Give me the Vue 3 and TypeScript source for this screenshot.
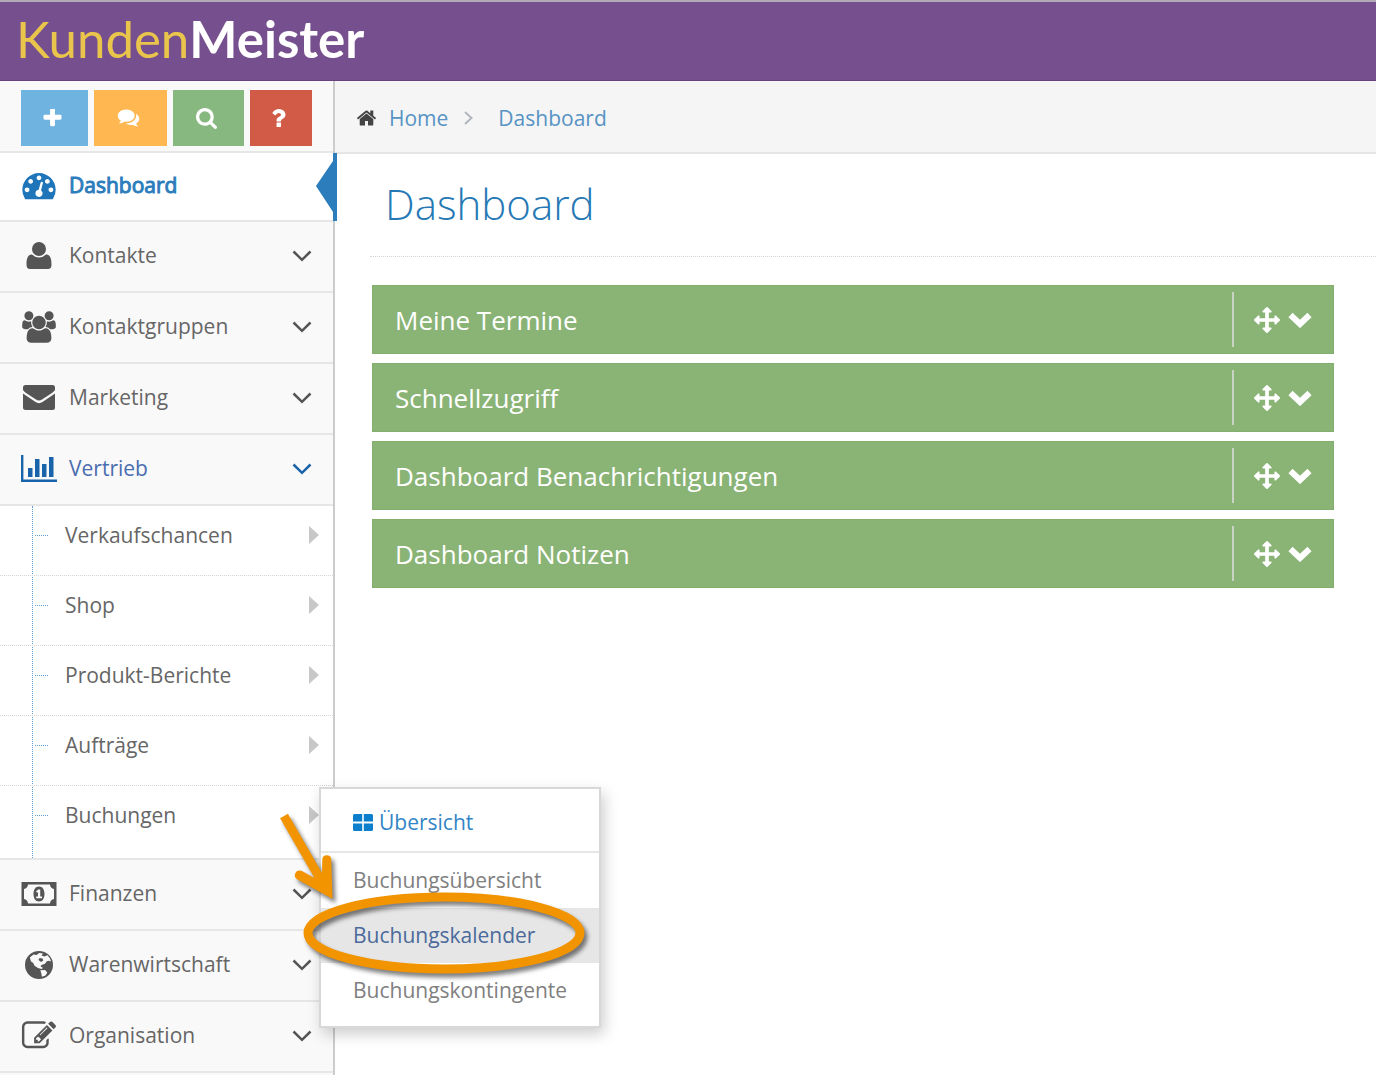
<script setup lang="ts">
interface Icon {
  box: string
  d: string
}

interface NavItem {
  label: string
  icon: string
  active?: boolean
  open?: boolean
  children?: string[]
}

const icons: Record<string, Icon> = {
  plus: {
    box: '192 192 1408 1408',
    d: 'M1600 736v192q0 40-28 68t-68 28h-416v416q0 40-28 68t-68 28h-192q-40 0-68-28t-28-68v-416h-416q-40 0-68-28t-28-68v-192q0-40 28-68t68-28h416v-416q0-40 28-68t68-28h192q40 0 68 28t28 68v416h416q40 0 68 28t28 68z',
  },
  comments: {
    box: '0 128 1792 1664',
    d: 'M1408 768q0 139-94 257t-256.5 186.5-353.5 68.5q-86 0-176-16-124 88-278 128-36 9-86 16h-3q-11 0-20.5-8t-11.5-21q-1-3-1-6.5t.5-6.5 2-6l2.5-5 3.5-5.5 4-5 4.5-5 4-4.5q5-6 23-25t26-29.5 22.5-29 25-38.5 20.5-44q-124-72-195-177t-71-224q0-139 94-257t256.5-186.5 353.5-68.5 353.5 68.5 256.5 186.5 94 257zm384 256q0 120-71 224.5t-195 176.5q10 24 20.5 44t25 38.5 22.5 29 26 29.5 23 25q1 1 4 4.5t4.5 5 4 5 3.5 5.5l2.5 5 2 6 .5 6.5-1 6.5q-3 14-13 22t-22 7q-50-7-86-16-154-40-278-128-90 16-176 16-271 0-472-132 58 4 88 4 161 0 309-45t264-129q125-92 192-212t67-254q0-77-23-152 129 71 204 178t75 230z',
  },
  search: {
    box: '64 128 1664 1664',
    d: 'M1216 832q0-185-131.5-316.5t-316.5-131.5-316.5 131.5-131.5 316.5 131.5 316.5 316.5 131.5 316.5-131.5 131.5-316.5zm512 832q0 52-38 90t-90 38q-54 0-90-38l-343-342q-179 124-399 124-143 0-273.5-55.5t-225-150-150-225-55.5-273.5 55.5-273.5 150-225 225-150 273.5-55.5 273.5 55.5 225 150 150 225 55.5 273.5q0 220-124 399l343 343q37 37 37 90z',
  },
  question: {
    box: '484 256 920 1280',
    d: 'M1088 1256v240q0 16-12 28t-28 12h-240q-16 0-28-12t-12-28v-240q0-16 12-28t28-12h240q16 0 28 12t12 28zm316-600q0 54-15.5 101t-35 76.5-55 59.5-57.5 43.5-61 35.5q-41 23-68.5 65t-27.5 67q0 17-12 32.5t-28 15.5h-240q-15 0-25.5-18.5t-10.5-37.5v-45q0-83 65-156.5t143-108.5q59-27 84-56t25-76q0-42-46.5-74t-107.5-32q-65 0-108 29-35 25-107 115-13 16-31 16-12 0-25-8l-164-125q-13-10-15.5-25t5.5-28q160-266 464-266 80 0 161 31t146 83 106 127.5 41 158.5z',
  },
  home: {
    box: '90 248 1612 1288',
    d: 'M1472 992v480q0 26-19 45t-45 19h-384v-384h-256v384h-384q-26 0-45-19t-19-45v-480q0-1 .5-3t.5-3l575-474 575 474q1 2 1 6zm223-69l-62 74q-8 9-21 11h-3q-13 0-21-7l-692-577-692 577q-12 8-24 7-13-2-21-11l-62-74q-8-10-7-23.5t11-21.5l719-599q32-26 76-26t76 26l244 204v-195q0-14 9-23t23-9h192q14 0 23 9t9 23v408l219 182q10 8 11 21.5t-7 23.5z',
  },
  gauge: {
    box: '-70 100 1932 1700',
    d: 'M384 1152q0-53-37.5-90.5t-90.5-37.5-90.5 37.5-37.5 90.5 37.5 90.5 90.5 37.5 90.5-37.5 37.5-90.5zm192-448q0-53-37.5-90.5t-90.5-37.5-90.5 37.5-37.5 90.5 37.5 90.5 90.5 37.5 90.5-37.5 37.5-90.5zm428 481l101-382q6-26-7.5-48.5t-38.5-29.5-48 6.5-30 39.5l-101 382q-60 5-107 43.5t-63 98.5q-20 77 20 146t117 89 146-20 89-117q16-60-6-117t-72-91zm660-33q0-53-37.5-90.5t-90.5-37.5-90.5 37.5-37.5 90.5 37.5 90.5 90.5 37.5 90.5-37.5 37.5-90.5zm-640-640q0-53-37.5-90.5t-90.5-37.5-90.5 37.5-37.5 90.5 37.5 90.5 90.5 37.5 90.5-37.5 37.5-90.5zm448 192q0-53-37.5-90.5t-90.5-37.5-90.5 37.5-37.5 90.5 37.5 90.5 90.5 37.5 90.5-37.5 37.5-90.5zm320 448q0 261-141 483-19 29-54 29h-1402q-35 0-54-29-141-221-141-483 0-182 71-348t191-286 286-191 348-71 348 71 286 191 191 286 71 348z',
  },
  user: {
    box: '0 0 36 32',
    d: 'M18 2a7 7 0 1 1 0 14a7 7 0 1 1 0-14zM11 14.500Q14 17.500 18 17.500T25 14.500C29.500 14.500 30.500 19 30.500 24.500Q30.500 29 27 29H9Q5.500 29 5.500 24.500C5.500 19 6.500 14.500 11 14.500z',
  },
  users: {
    box: '0 0 2048 1792',
    d: 'M657 896q-162 5-265 128h-134q-82 0-138-40.5t-56-118.5q0-353 124-353 6 0 43.500 21t97.500 42.500 119 21.500q67 0 133-23-5 37-5 66 0 139 81 256zm1071 637q0 120-73 189.500t-194 69.500h-874q-121 0-194-69.500t-73-189.500q0-53 3.500-103.500t14-109 26.500-108.500 43-97.500 62-81 85.500-53.500 111.500-20q10 0 43 21.500t73 48 107 48 135 21.500 135-21.500 107-48 73-48 43-21.500q61 0 111.500 20t85.500 53.500 62 81 43 97.500 26.500 108.500 14 109 3.500 103.500zm-1024-1277q0 106-75 181t-181 75-181-75-75-181 75-181 181-75 181 75 75 181zm704 384q0 159-112.500 271.500t-271.500 112.500-271.500-112.500-112.500-271.500 112.500-271.500 271.500-112.500 271.500 112.500 112.500 271.500zm576 225q0 78-56 118.500t-138 40.500h-134q-103-123-265-128 81-117 81-256 0-29-5-66 66 23 133 23 59 0 119-21.500t97.500-42.500 43.500-21q124 0 124 353zm-128-609q0 106-75 181t-181 75-181-75-75-181 75-181 181-75 181 75 75 181z',
  },
  envelope: {
    box: '0 0 36 32',
    d: 'M2 5.500Q2 3 4.500 3H31.500Q34 3 34 5.500V8Q33 9.500 31 11L21 17.500Q18 19.500 15 17.500L5 11Q3 9.500 2 8zM2 11.500L14.500 20Q18 22.300 21.500 20L34 11.500V25.500Q34 28 31.500 28H4.500Q2 28 2 25.500z',
  },
  chart: {
    box: '0 0 36 32',
    d: 'M0 2H2.400V26.400H36V29H0zM7 15H11.500V24H7zM14 6H18.500V24H14zM21 11H25.500V24H21zM28 4H32.500V24H28z',
  },
  money: {
    box: '0 0 36 32',
    d: 'M.5 4H35.500V28H.5zM7 6.500A5 5 0 0 1 3 11V21A5 5 0 0 1 7 25.500H29A5 5 0 0 1 33 21V11A5 5 0 0 1 29 6.500zM18 8.500C21.800 8.500 23.500 12 23.500 16S21.800 23.500 18 23.500S12.500 20 12.500 16S14.200 8.500 18 8.500zM17.200 11.500L15 13.500L16.200 14.800L17 14.200V18.500H15.200V20.300H21V18.500H19.200V11.500z',
  },
  globe: {
    box: '0 0 36 32',
    d: 'M18 2a14 14 0 1 1 0 28a14 14 0 1 1 0-28zM8.800 8.500L12.500 5.500L15.500 6L18.300 4L22 4.600L20.500 6.500L23.500 7.500L26.500 6.300L29 9.500L30 12.500L27.500 11.800L25.500 12.500L24 14.800L20.500 16L19.500 17.300L22 19L20.500 20L17 19L13.500 16.800L12.300 14L10 12.500zM18.500 9L17.500 11L20 13L22.300 11.500L21.500 9.500zM19.300 21.300L24 21L26.300 23.500L24.500 26.500L20.800 27.800L20.500 25z',
  },
  edit: {
    box: '-20 56 1832 1680',
    d: 'M888 1184l116-116-152-152-116 116v56h96v96h56zm440-720q-16-16-33 1l-350 350q-17 17-1 33t33-1l350-350q17-17 1-33zm80 594v190q0 119-84.500 203.500t-203.500 84.500h-832q-119 0-203.500-84.500t-84.500-203.500v-832q0-119 84.500-203.500t203.500-84.500h832q63 0 117 25 15 7 18 23 3 17-9 29l-49 49q-14 14-32 8-23-6-45-6h-832q-66 0-113 47t-47 113v832q0 66 47 113t113 47h832q66 0 113-47t47-113v-126q0-13 9-22l64-64q15-15 35-7t20 29zm-96-738l288 288-672 672h-288v-288zm444 132l-92 92-288-288 92-92q28-28 68-28t68 28l152 152q28 28 28 68t-28 68z',
  },
  move: {
    box: '0 0 1792 1792',
    d: 'M1792 896q0 26-19 45l-256 256q-19 19-45 19t-45-19-19-45v-128h-384v384h128q26 0 45 19t19 45-19 45l-256 256q-19 19-45 19t-45-19l-256-256q-19-19-19-45t19-45 45-19h128v-384h-384v128q0 26-19 45t-45 19-45-19l-256-256q-19-19-19-45t19-45l256-256q19-19 45-19t45 19 19 45v128h384v-384h-128q-26 0-45-19t-19-45 19-45l256-256q19-19 45-19t45 19l256 256q19 19 19 45t-19 45-45 19h-128v384h384v-128q0-26 19-45t45-19 45 19l256 256q19 19 19 45z',
  },
}

const shortcuts = [
  { icon: 'plus', label: 'Neu', tone: 'blue' },
  { icon: 'comments', label: 'Nachrichten', tone: 'orange' },
  { icon: 'search', label: 'Suche', tone: 'green' },
  { icon: 'question', label: 'Hilfe', tone: 'red' },
]

const nav: NavItem[] = [
  { label: 'Dashboard', icon: 'gauge', active: true },
  { label: 'Kontakte', icon: 'user' },
  { label: 'Kontaktgruppen', icon: 'users' },
  { label: 'Marketing', icon: 'envelope' },
  {
    label: 'Vertrieb',
    icon: 'chart',
    open: true,
    children: ['Verkaufschancen', 'Shop', 'Produkt-Berichte', 'Aufträge', 'Buchungen'],
  },
  { label: 'Finanzen', icon: 'money' },
  { label: 'Warenwirtschaft', icon: 'globe' },
  { label: 'Organisation', icon: 'edit' },
]

const flyout = ['Buchungsübersicht', 'Buchungskalender', 'Buchungskontingente']
const highlighted = 'Buchungskalender'

const panels = ['Meine Termine', 'Schnellzugriff', 'Dashboard Benachrichtigungen', 'Dashboard Notizen']
</script>

<template>
  <div class="app">
    <header class="topbar">
      <a href="#" class="brand"><span class="brand-first">Kunden</span><span class="brand-second">Meister</span></a>
    </header>

    <div class="body">
      <aside class="sidebar">
        <div class="shortcuts">
          <button v-for="s in shortcuts" :key="s.icon" type="button" :class="['shortcut', s.tone]" :aria-label="s.label">
            <svg :class="['glyph', s.icon]" :viewBox="icons[s.icon].box" aria-hidden="true"><path :d="icons[s.icon].d" /></svg>
          </button>
        </div>

        <nav>
          <ul class="menu">
            <li v-for="item in nav" :key="item.label" :class="['entry', { active: item.active, open: item.open }]">
              <a href="#" class="entry-link">
                <svg class="entry-icon" :viewBox="icons[item.icon].box" aria-hidden="true"><path fill-rule="evenodd" :d="icons[item.icon].d" /></svg>
                <span class="entry-label">{{ item.label }}</span>
                <svg v-if="!item.active" class="entry-caret" viewBox="0 0 20 12" aria-hidden="true"><path d="M1.500 1.500L10 9.800L18.500 1.500" /></svg>
              </a>
              <svg v-if="item.active" class="marker" viewBox="0 0 21 68" aria-hidden="true"><path d="M17 0H21V68H17V59L0 33L17 8z" /></svg>

              <ul v-if="item.children" class="submenu">
                <li v-for="child in item.children" :key="child" class="sub">
                  <a href="#" class="sub-link">
                    <span>{{ child }}</span>
                    <svg class="sub-caret" viewBox="0 0 10 18" aria-hidden="true"><path d="M0 0L10 9L0 18z" /></svg>
                  </a>

                  <div v-if="child === 'Buchungen'" class="flyout">
                    <a href="#" class="flyout-head">
                      <svg class="tiles" viewBox="0 0 20 17" aria-hidden="true"><path d="M0 1.500Q0 0 1.500 0H9.200V7.600H0zM10.800 0H18.500Q20 0 20 1.500V7.600H10.800zM0 9.400H9.200V17H1.500Q0 17 0 15.500zM10.800 9.400H20V15.500Q20 17 18.500 17H10.800z" /></svg>
                      <span>Übersicht</span>
                    </a>
                    <a v-for="f in flyout" :key="f" href="#" :class="['flyout-link', { hover: f === highlighted }]">{{ f }}</a>
                    <svg class="callout" viewBox="270 780 350 270" aria-hidden="true">
                      <ellipse cx="444" cy="933" rx="136" ry="36" />
                      <path class="shaft" d="M284 816L322 882" />
                      <path class="tip" d="M294.800 874.800Q296 869.500 301.500 870.800L314.500 878L322 875L322.300 859Q322.700 855.200 326.700 855.200Q331 855.500 331.200 859L332.500 899L297.500 879.500Q294.500 877.800 294.800 874.800z" />
                    </svg>
                  </div>
                </li>
              </ul>
            </li>
          </ul>
        </nav>
      </aside>

      <main class="content">
        <nav class="crumbs" aria-label="Breadcrumb">
          <svg class="crumb-home" :viewBox="icons.home.box" aria-hidden="true"><path :d="icons.home.d" /></svg>
          <a href="#">Home</a>
          <svg class="crumb-sep" viewBox="0 0 9 14" aria-hidden="true"><path d="M1 1L7.500 7L1 13" /></svg>
          <a href="#">Dashboard</a>
        </nav>

        <div class="page">
          <h1>Dashboard</h1>
          <div class="panels">
            <section v-for="p in panels" :key="p" class="panel">
              <h2>{{ p }}</h2>
              <div class="tools">
                <button type="button" :aria-label="p + ' verschieben'">
                  <svg class="tool-move" :viewBox="icons.move.box" aria-hidden="true"><path :d="icons.move.d" /></svg>
                </button>
                <button type="button" :aria-label="p + ' aufklappen'">
                  <svg class="tool-down" viewBox="0 0 24 16" aria-hidden="true"><path d="M2.500 3L12 12L21.500 3" /></svg>
                </button>
              </div>
            </section>
          </div>
        </div>
      </main>
    </div>
  </div>
</template>

<style>
body {
  margin: 0;
  background: #fff;
}
</style>

<style scoped>
.app {
  display: flex;
  flex-direction: column;
  min-height: 100vh;
  font-family: 'Open Sans', 'Noto Sans', sans-serif;
  font-size: 21px;
  line-height: 30px;
  color: #666;
}
a {
  color: inherit;
  text-decoration: none;
}
ul {
  list-style: none;
  margin: 0;
  padding: 0;
}
button {
  border: 0;
  background: none;
  cursor: pointer;
}
svg {
  display: block;
  flex: none;
  fill: currentColor;
}

.topbar {
  box-sizing: border-box;
  height: 81px;
  padding: 0 16px;
  background: #764f8e;
  border-top: 2px solid #b3a9b8;
  border-bottom: 1px solid #69417f;
}
.brand {
  display: inline-flex;
  font-family: Lato, 'Open Sans', sans-serif;
  font-size: 51px;
  line-height: 74px;
}
.brand-first {
  color: #eac54b;
}
.brand-second {
  color: #fff;
  font-weight: 700;
}

.body {
  display: flex;
  flex: 1;
}
.sidebar {
  flex: none;
  width: 333px;
  background: #f9f9f9;
  border-right: 2px solid #ccc;
}
.shortcuts {
  display: flex;
  gap: 6px;
  padding: 9px 21px 5px;
}
.shortcut {
  display: flex;
  align-items: center;
  height: 56px;
  padding: 0 26px 0 22px;
  color: #fff;
}
.blue { background: #6fb3e0; }
.orange { background: #ffb752; }
.green { background: #87b87f; }
.red { background: #d15b47; }
.glyph { height: 18px; }
.glyph.plus { width: 19px; }
.glyph.comments { width: 25px; height: 20px; }
.glyph.search { width: 23px; height: 21px; }
.glyph.question { width: 14px; }

.entry {
  position: relative;
  border-top: 2px solid #e6e6e6;
}
.entry:last-child {
  border-bottom: 2px solid #e6e6e6;
}
.entry-link {
  display: flex;
  align-items: center;
  box-sizing: border-box;
  height: 69px;
  padding: 0 21px 1px;
}
.entry-icon {
  width: 36px;
  height: 32px;
  color: #555;
}
.entry-label {
  flex: 1;
  margin-left: 12px;
  padding-bottom: 3px;
}
.entry-caret {
  width: 20px;
  height: 12px;
  fill: none;
  stroke: #555;
  stroke-width: 2.500;
}
.active {
  background: #fff;
  color: #2b7dbc;
}
.active .entry-link {
  height: 67px;
}
.active .entry-label {
  -webkit-text-stroke: 1px currentColor;
}
.active .entry-icon {
  color: #1f75ba;
}
.marker {
  position: absolute;
  top: 0;
  right: -4px;
  width: 21px;
  height: 68px;
}
.open > .entry-link {
  color: #4a6cb0;
}
.open > .entry-link .entry-icon {
  color: #1963aa;
}
.open > .entry-link .entry-caret {
  stroke: #1963aa;
}

.submenu {
  position: relative;
  background: #fff;
  border-top: 2px solid #e6e6e6;
}
.submenu::before {
  content: '';
  position: absolute;
  top: 0;
  bottom: 0;
  left: 32px;
  border-left: 1px dotted #5fa0d8;
}
.sub {
  position: relative;
  border-bottom: 1px dotted #d5d5d5;
}
.sub:last-child {
  border-bottom: 0;
}
.sub::before {
  content: '';
  position: absolute;
  top: 29px;
  left: 35px;
  width: 13px;
  border-top: 1px dotted #5fa0d8;
}
.sub-link {
  display: flex;
  align-items: center;
  justify-content: space-between;
  height: 57px;
  padding: 0 14px 12px 65px;
}
.sub:last-child .sub-link {
  padding-bottom: 15px;
}
.sub-caret {
  width: 10px;
  height: 18px;
  color: #c8c8c8;
}

.flyout {
  position: absolute;
  z-index: 2;
  top: 1px;
  left: 319px;
  width: 278px;
  padding-bottom: 8px;
  background: #fff;
  border: 2px solid #d8d8d8;
  box-shadow: 3px 6px 14px rgba(0, 0, 0, 0.2);
}
.flyout-head {
  display: flex;
  align-items: center;
  gap: 6px;
  height: 64px;
  padding: 4px 0 0 32px;
  box-sizing: border-box;
  color: #3385c6;
  border-bottom: 2px solid #e6e6e6;
}
.tiles {
  width: 20px;
  height: 17px;
  color: #0b7fcb;
}
.flyout-link {
  display: block;
  padding-left: 32px;
  line-height: 55px;
  color: #808080;
}
.flyout-link.hover {
  background: #e6e6e6;
  color: #4b6a9b;
}
.callout {
  position: absolute;
  top: -9px;
  left: -51px;
  width: 350px;
  height: 270px;
  pointer-events: none;
  filter: drop-shadow(3px 4px 2px rgba(0, 0, 0, 0.5));
}
.callout ellipse,
.callout .shaft {
  fill: none;
  stroke: #f29400;
  stroke-width: 9;
}
.callout .tip {
  fill: #f29400;
}

.content {
  flex: 1;
  min-width: 0;
}
.crumbs {
  display: flex;
  align-items: center;
  height: 68px;
  padding: 3px 22px 0;
  background: #f5f5f5;
  border-bottom: 2px solid #e5e5e5;
  color: #5793c4;
}
.crumb-home {
  width: 19px;
  height: 16px;
  margin-right: 13px;
  color: #444;
}
.crumb-sep {
  width: 9px;
  height: 14px;
  margin: 0 25px 0 16px;
  fill: none;
  stroke: #b2b6bf;
  stroke-width: 2;
}
.page {
  padding-left: 35px;
}
h1 {
  margin: 0;
  padding: 22px 15px 24px;
  font-size: 42px;
  line-height: 56px;
  font-weight: 300;
  color: #2679b5;
  border-bottom: 1px dotted #d5d5d5;
}
.panels {
  display: flex;
  flex-direction: column;
  gap: 9px;
  padding: 28px 42px 28px 2px;
}
.panel {
  box-sizing: border-box;
  display: flex;
  align-items: center;
  justify-content: space-between;
  height: 69px;
  background: #8ab376;
  border: 1px solid #82b06c;
  color: #fff;
}
h2 {
  margin: 0;
  padding-left: 22px;
  font-size: 26px;
  line-height: 36px;
  font-weight: 500;
}
.tools {
  display: flex;
  align-items: center;
  gap: 8px;
  height: 55px;
  padding: 0 21px 0 20px;
  border-left: 2px solid #c9d3c3;
}
.tools button {
  padding: 0;
  color: #fff;
}
.tool-move {
  width: 26px;
  height: 26px;
}
.tool-down {
  width: 24px;
  height: 16px;
  fill: none;
  stroke: currentColor;
  stroke-width: 6;
}
</style>
